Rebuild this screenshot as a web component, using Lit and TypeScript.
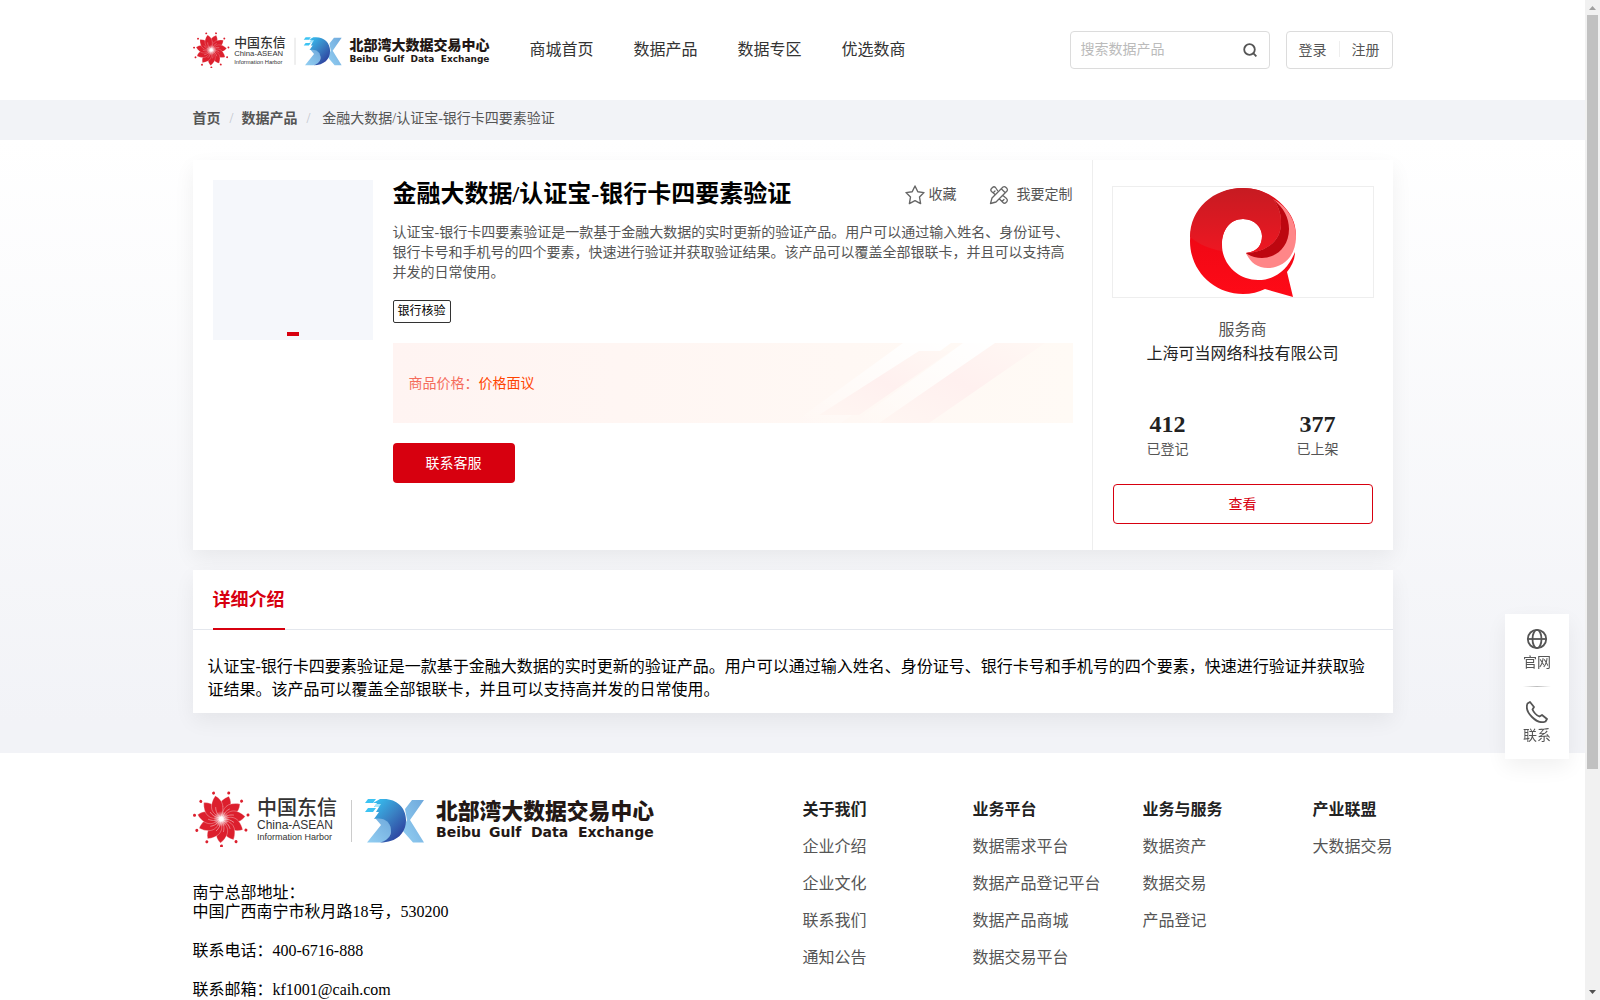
import { LitElement, html, css, svg } from "lit";
import { customElement } from "lit/decorators.js";

const NAV = ["商城首页", "数据产品", "数据专区", "优选数商"];
const INTRO =
  "认证宝-银行卡四要素验证是一款基于金融大数据的实时更新的验证产品。用户可以通过输入姓名、身份证号、银行卡号和手机号的四个要素，快速进行验证并获取验证结果。该产品可以覆盖全部银联卡，并且可以支持高并发的日常使用。";
const LINKS = [
  { title: "关于我们", items: ["企业介绍", "企业文化", "联系我们", "通知公告"] },
  { title: "业务平台", items: ["数据需求平台", "数据产品登记平台", "数据产品商城", "数据交易平台"] },
  { title: "业务与服务", items: ["数据资产", "数据交易", "产品登记"] },
  { title: "产业联盟", items: ["大数据交易"] },
];

@customElement("brand-logo")
export class BrandLogo extends LitElement {
  static styles = css`
    :host { display: block; }
    .art { display: block; width: 100%; height: auto; }
    .cn { font-family: "Noto Sans CJK SC", sans-serif; }
    .en { font-family: "Liberation Sans", sans-serif; }
    .wide { font-family: "DejaVu Sans", sans-serif; font-weight: 700; }
    .heavy { font-weight: 900; }
    .medium { font-weight: 500; }
  `;
  render() {
    const turns = Array.from({ length: 11 }, (_, i) => (i * 360) / 11 + 16);
    return html`<svg class="art" viewBox="0 0 463 56" role="img" aria-label="北部湾大数据交易中心">
      <defs>
        <linearGradient id="deep" x1="0" y1="0" x2="0.8" y2="1">
          <stop offset="0" stop-color="#35c5f5" /><stop offset="0.5" stop-color="#3a82c4" /><stop offset="1" stop-color="#2b3a9b" />
        </linearGradient>
        <linearGradient id="pale" x1="0" y1="1" x2="1" y2="0">
          <stop offset="0" stop-color="#93cff2" /><stop offset="1" stop-color="#6fa9dc" />
        </linearGradient>
        <radialGradient id="burst">
          <stop offset="0" stop-color="#fff" /><stop offset="0.4" stop-color="#fff" stop-opacity="0.6" /><stop offset="1" stop-color="#fff" stop-opacity="0" />
        </radialGradient>
      </defs>
      ${turns.map(
        (a) => svg`<g transform="translate(28.3 28) rotate(${a})">
          <path d="M0-2 C-8-7-9-16 1-24 C7-18 7-10 0-2Z" fill="#dc1f2d" stroke="#fff" stroke-width="0.3" />
          <path d="M0-2 C-3-6-3-9-2-13" fill="none" stroke="#fff" stroke-width="0.4" />
          <circle cx="0" cy="-27" r="1.500" fill="#dc1f2d" />
        </g>`
      )}
      <circle cx="28.300" cy="28" r="8" fill="url(#burst)" />
      <text class="cn medium" x="64" y="24" font-size="20" fill="#333">中国东信</text>
      <text class="en" x="64" y="38" font-size="12" fill="#333">China-ASEAN</text>
      <text class="en" x="64" y="49" font-size="9" fill="#333">Information Harbor</text>
      <path d="M158.500 9V51" stroke="#ccc" />
      <path d="M219 9H231L217 29L231 51.500H220L209 39L214 29L212 18Z" fill="url(#pale)" />
      <path d="M174 51.500L188 34L182 27C190 25 199 31 198 40C198 45 194 51 187 51.500Z" fill="url(#pale)" />
      <path d="M187 8H191C204 8 213 17 213 29C213 42 204 51.500 187 51.500C194 50 198 45 198 40C198 31 191 26 181 28L186 21H183L186 16H181L184 12H180Z" fill="url(#deep)" />
      <path d="M175 8H183L180 12H172ZM175 17H183L180 21H172Z" fill="#3cc3f3" />
      <path d="M183 13H188L186 16H181Z" fill="#a5e6fb" />
      <text class="cn heavy" x="243" y="28" font-size="21.800" fill="#231815">北部湾大数据交易中心</text>
      <text class="wide" y="46" font-size="14" fill="#231815"><tspan x="243">Beibu </tspan><tspan x="296">Gulf </tspan><tspan x="338">Data </tspan><tspan x="385">Exchange</tspan></text>
    </svg>`;
  }
}

@customElement("app-root")
export class AppRoot extends LitElement {
  static styles = css`
    :host {
      display: block;
      height: 100vh;
      overflow: hidden;
      font-family: "Liberation Serif", "Noto Sans CJK SC", serif;
      font-size: 16px;
      color: #000;
      background: #fff;
    }
    * { box-sizing: border-box; }
    a { color: inherit; text-decoration: none; }
    button { font: inherit; cursor: pointer; }
    h1, h2, h3, p, ul, dl, dd { margin: 0; padding: 0; }
    ul { list-style: none; }
    svg { display: block; flex: none; }
    .shell { display: flex; height: 100%; }
    .page { flex: 1; min-width: 0; overflow: hidden; }
    .wrap { width: 76%; max-width: 1200px; min-width: 1000px; margin: 0 auto; }

    .head { height: 100px; display: flex; align-items: center; }
    .head-logo { width: 298px; margin-right: 39px; }
    .nav { display: flex; gap: 40px; flex: 1; color: #333; line-height: 24px; }
    .search {
      display: flex; align-items: center; width: 200px; height: 38px; padding: 0 12px 0 10px;
      border: 1px solid #dcdcdc; border-radius: 4px; margin-right: 16px;
    }
    .search-box { flex: 1; min-width: 0; border: 0; outline: 0; padding: 0; background: none; font: inherit; font-size: 14px; color: #333; }
    .search-box::placeholder { color: #bbb; opacity: 1; }
    .icon-button { border: 0; padding: 0; background: none; }
    .account {
      display: flex; align-items: center; gap: 12px; height: 38px; padding: 0 12px 2px;
      border: 1px solid #dcdcdc; border-radius: 4px; font-size: 14px; color: #555;
    }
    .account-line { width: 1px; height: 16px; background: #eee; }

    .crumb-bar { background: #f2f3f7; }
    .crumbs { display: flex; height: 40px; line-height: 38px; font-size: 14px; color: #555; }
    .crumb-strong { font-weight: 700; }
    .crumb-sep { color: #c0c4cc; margin: 0 8px 0 9px; }
    .crumb-current { margin-left: 4px; }

    .body { padding: 20px 0 40px; background: linear-gradient(#fff, #f2f3f7 95%); }
    .card { background: #fff; box-shadow: 0 8px 20px rgba(0, 0, 0, 0.06); }
    .product { display: flex; min-height: 390px; }
    .main { flex: 1; min-width: 0; display: flex; gap: 20px; padding: 20px; padding-right: 19px; }
    .thumb { width: 160px; height: 160px; flex: none; background: #f5f7fb; display: flex; align-items: flex-end; justify-content: center; padding-bottom: 4px; }
    .thumb-dot { width: 12px; height: 4px; border: 0; padding: 0; background: #d7000f; }
    .info { flex: 1; min-width: 0; }
    .title-row { display: flex; align-items: center; height: 28px; }
    .title { flex: 1; font-size: 24px; line-height: 28px; font-weight: 700; white-space: nowrap; }
    .action { display: flex; align-items: center; border: 0; padding: 0 0 2px; background: none; font-size: 14px; color: #555; }
    .action svg { margin-top: 4px; }
    .star { gap: 4px; margin-right: 32px; }
    .custom { gap: 8px; }
    .summary { margin-top: 15px; font-size: 14px; line-height: 20px; color: #555; }
    .tag { display: block; width: fit-content; margin-top: 17px; height: 23px; padding: 0 4px; border: 1px solid #333; border-radius: 2px; font-size: 12px; line-height: 21px; }
    .price { position: relative; display: flex; align-items: center; height: 80px; margin-top: 20px; padding: 0 0 2px 16px; overflow: hidden; background: linear-gradient(90deg, #fff4f2, #fffaf5); font-size: 14px; color: #f56c5c; }
    .price-art { position: absolute; right: 0; top: 0; height: 80px; width: 290px; }
    .price-value { color: #ff4400; }
    .contact { margin-top: 20px; width: 122px; height: 40px; padding: 0 0 2px; border: 0; border-radius: 4px; background: #d7000f; color: #fff; font-size: 14px; }

    .vendor { width: 301px; flex: none; padding: 26px 19px; border-left: 1px solid #eee; display: flex; flex-direction: column; text-align: center; }
    .vendor-pic { height: 112px; border: 1px solid #eee; display: flex; justify-content: center; }
    .vendor-label { margin-top: 20px; line-height: 24px; color: #555; }
    .vendor-name { line-height: 24px; color: #222; }
    .stats { display: flex; margin: 44px -19px 0; }
    .stat { flex: 1; }
    .stat-number { font-size: 24px; line-height: 28px; font-weight: 700; color: #222; }
    .stat-label { font-size: 14px; line-height: 24px; color: #555; }
    .view { margin: 22px 1px 0; height: 40px; padding: 0 0 2px; border: 1px solid #d7000f; border-radius: 4px; background: #fff; color: #d7000f; font-size: 14px; }

    .detail { margin-top: 20px; }
    .tabs { height: 60px; padding: 0 20px; border-bottom: 1px solid #e4e7ed; display: flex; }
    .tab { height: 60px; border: 0; border-bottom: 2px solid #d7000f; padding: 0 0 2px; background: none; font-size: 18px; font-weight: 700; color: #d7000f; }
    .detail-text { padding: 25px 16px 12px 15px; line-height: 23px; }

    .foot { display: flex; padding-top: 38px; }
    .foot-left { width: 610px; flex: none; }
    .foot-logo { width: 463px; }
    .address { margin-top: 36px; line-height: 19px; }
    .address-line { margin-top: 20px; line-height: 19px; }
    .foot-links { flex: 1; display: grid; grid-template-columns: 170px 170px 170px auto; color: #555; white-space: nowrap; }
    .foot-title { font-size: 16px; line-height: 37px; color: #222; }
    .foot-item { line-height: 37px; }

    .float { position: fixed; right: 31px; top: 614px; width: 64px; height: 145px; background: #fff; box-shadow: 0 8px 20px rgba(0, 0, 0, 0.06); display: flex; flex-direction: column; align-items: center; font-size: 14px; line-height: 20px; color: #555; }
    .float-link { display: flex; flex-direction: column; align-items: center; gap: 3px; padding-top: 14px; height: 73px; }
    .float-line { width: 28px; height: 1px; background: linear-gradient(90deg, #fff, #bbb, #fff); }

    .rail { width: 15px; flex: none; background: #f1f1f1; display: flex; flex-direction: column; align-items: center; padding: 4px 0; justify-content: space-between; }
    .rail-thumb { width: 11px; height: 76%; background: #c1c1c1; margin-top: 4px; margin-bottom: auto; }
  `;

  private readonly star = html`<svg width="20" height="20" viewBox="0 0 20 20" fill="none" stroke="#666" stroke-width="1.400" stroke-linejoin="round" aria-hidden="true"><path d="M10 1L12.800 6.700L19 7.600L14.500 12L15.600 18.600L10 15.600L4.400 18.600L5.500 12L1 7.600L7.200 6.700Z" /></svg>`;
  private readonly tools = html`<svg width="20" height="20" viewBox="0 0 20 20" fill="none" stroke="#666" stroke-width="1.300" stroke-linejoin="round" stroke-linecap="round" aria-hidden="true"><path d="M8.500 5.500L6.500 2.500Q5 1 3.500 2.500L2.500 3.500Q1 5 2.500 6.500L5.500 9M11 14.500L14 17.500Q15.500 19 17 17.500L18 16.500Q19 15 17.500 13.500L14.500 11M1.500 18.500L3 13L14 2Q15.500 1 17 2.500L18 3.500Q19 5 18 6L7 17ZM12.500 4L16 7.500M4.500 7.500L6 6M13 16.500L15 14.500" /></svg>`;

  render() {
    return html`<div class="shell">
        <div class="page">
          <header class="wrap head">
            <brand-logo class="head-logo"></brand-logo>
            <nav class="nav">${NAV.map((n) => html`<a href="#">${n}</a>`)}</nav>
            <form class="search">
              <input class="search-box" type="text" aria-label="搜索数据产品" placeholder="搜索数据产品" />
              <button class="icon-button" type="button" aria-label="搜索">
                <svg width="14" height="14" viewBox="0 0 14 14" fill="none" stroke="#555" stroke-width="1.800"><circle cx="6.500" cy="6.500" r="5.300" /><path d="M10.200 10.200L13.400 13.400" /></svg>
              </button>
            </form>
            <div class="account"><a href="#">登录</a><span class="account-line"></span><a href="#">注册</a></div>
          </header>
          <div class="crumb-bar">
            <nav class="wrap crumbs">
              <a class="crumb-strong" href="#">首页</a><span class="crumb-sep">/</span>
              <a class="crumb-strong" href="#">数据产品</a><span class="crumb-sep">/</span>
              <span class="crumb-current">金融大数据/认证宝-银行卡四要素验证</span>
            </nav>
          </div>
          <main class="body">
            <section class="wrap card product">
              <div class="main">
                <div class="thumb"><button class="thumb-dot" aria-label="1"></button></div>
                <div class="info">
                  <div class="title-row">
                    <h1 class="title">金融大数据/认证宝-银行卡四要素验证</h1>
                    <button class="action star">${this.star}收藏</button>
                    <button class="action custom">${this.tools}我要定制</button>
                  </div>
                  <p class="summary">${INTRO}</p>
                  <span class="tag">银行核验</span>
                  <div class="price">
                    <svg class="price-art" viewBox="0 0 290 80" aria-hidden="true">
                      <defs>
                        <linearGradient id="rose" x1="1" y1="0" x2="0" y2="1"><stop offset="0" stop-color="#fff8f4" /><stop offset="0.500" stop-color="#fff0ef" /><stop offset="1" stop-color="#fff6f2" /></linearGradient>
                        <linearGradient id="glow" x1="1" y1="0" x2="0" y2="1"><stop offset="0" stop-color="#fff" /><stop offset="1" stop-color="#fff" stop-opacity="0" /></linearGradient>
                      </defs>
                      <path d="M120 0H168L58 80H10Z" fill="url(#glow)" />
                      <path d="M136 8H168L76 72H36Z" fill="url(#rose)" />
                      <path d="M180 0H214L104 80H70Z" fill="url(#glow)" />
                      <path d="M212 0H262L146 80H96Z" fill="url(#rose)" />
                    </svg>
                    <span>商品价格：</span><span class="price-value">价格面议</span>
                  </div>
                  <button class="contact">联系客服</button>
                </div>
              </div>
              <aside class="vendor">
                <div class="vendor-pic">
                  <svg width="110" height="110" viewBox="0 0 110 110" role="img" aria-label="上海可当网络科技有限公司">
                    <defs>
                      <linearGradient id="q" x1="0" y1="0" x2="0" y2="1"><stop offset="0" stop-color="#c61b22" /><stop offset="1" stop-color="#ef1722" /></linearGradient>
                      <linearGradient id="low" x1="0" y1="0" x2="0" y2="1"><stop offset="0" stop-color="#e30613" /><stop offset="1" stop-color="#ff0a17" /></linearGradient>
                    </defs>
                    <path d="M55 1C25 1 2 25 2 54C2 84 26 107 55 107C63 107 71 105 77 102L105 110L99 85C104 79 107 72 107 65C100 82 88 93 70 93C50 93 34 77 34 58C34 43 42 32 55 32C67 32 74 41 74 49C74 57 70 65 58 66C66 79 85 84 97 72C111 58 111 38 99 23C88 9 73 1 55 1Z" fill="url(#low)" />
                    <path d="M55 1C25 1 2 22 2 50C12 58 22 62 34 64C32 46 40 32 55 32C67 32 74 41 74 49C74 57 70 65 58 66C72 69 90 64 98 50C103 28 88 1 55 1Z" fill="url(#q)" />
                    <path d="M58 66C76 65 94 56 93 34C93 25 89 17 85 12C100 20 108 34 108 50C108 68 96 81 80 81C69 81 62 75 58 66Z" fill="#ff8688" />
                    <path d="M58 66C76 65 94 56 93 34C93 25 89 17 85 12C96 21 101 31 101 42C101 61 87 71 74 71C68 71 62 69 58 66Z" fill="#bd0710" />
                  </svg>
                </div>
                <p class="vendor-label">服务商</p>
                <p class="vendor-name">上海可当网络科技有限公司</p>
                <div class="stats">
                  <div class="stat"><p class="stat-number">412</p><p class="stat-label">已登记</p></div>
                  <div class="stat"><p class="stat-number">377</p><p class="stat-label">已上架</p></div>
                </div>
                <button class="view">查看</button>
              </aside>
            </section>
            <section class="wrap card detail">
              <div class="tabs"><button class="tab">详细介绍</button></div>
              <p class="detail-text">${INTRO}</p>
            </section>
          </main>
          <footer class="wrap foot">
            <div class="foot-left">
              <brand-logo class="foot-logo"></brand-logo>
              <p class="address">南宁总部地址：<br />中国广西南宁市秋月路18号，530200</p>
              <p class="address-line">联系电话：400-6716-888</p>
              <p class="address-line">联系邮箱：kf1001@caih.com</p>
            </div>
            <div class="foot-links">
              ${LINKS.map(
                (c) => html`<section><h3 class="foot-title">${c.title}</h3>
                  <ul>${c.items.map((i) => html`<li class="foot-item"><a href="#">${i}</a></li>`)}</ul></section>`
              )}
            </div>
          </footer>
        </div>
        <div class="rail" aria-hidden="true">
          <svg width="7" height="7" viewBox="0 0 7 7"><path d="M0 6L3.500 2L7 6Z" fill="#a0a0a0" /></svg>
          <span class="rail-thumb"></span>
          <svg width="7" height="7" viewBox="0 0 7 7"><path d="M0 1L3.500 5L7 1Z" fill="#505050" /></svg>
        </div>
      </div>
      <aside class="float">
        <a class="float-link" href="#">
          <svg width="22" height="22" viewBox="0 0 22 22" fill="none" stroke="#555" stroke-width="1.800"><circle cx="11" cy="11" r="9.200" /><ellipse cx="11" cy="11" rx="4.500" ry="9.200" /><path d="M2 11H20" /></svg>官网</a>
        <span class="float-line"></span>
        <a class="float-link" href="#">
          <svg width="22" height="22" viewBox="0 0 22 22" fill="none" stroke="#555" stroke-width="1.800" stroke-linejoin="round"><path d="M1.500 2.500L4 1L8 6L6.500 8.500C8 12 10 14 13.500 15.500L16 14L21 18L19.500 20.500C11 24-2 11 1.500 2.500Z" /></svg>联系</a>
      </aside>`;
  }
}
